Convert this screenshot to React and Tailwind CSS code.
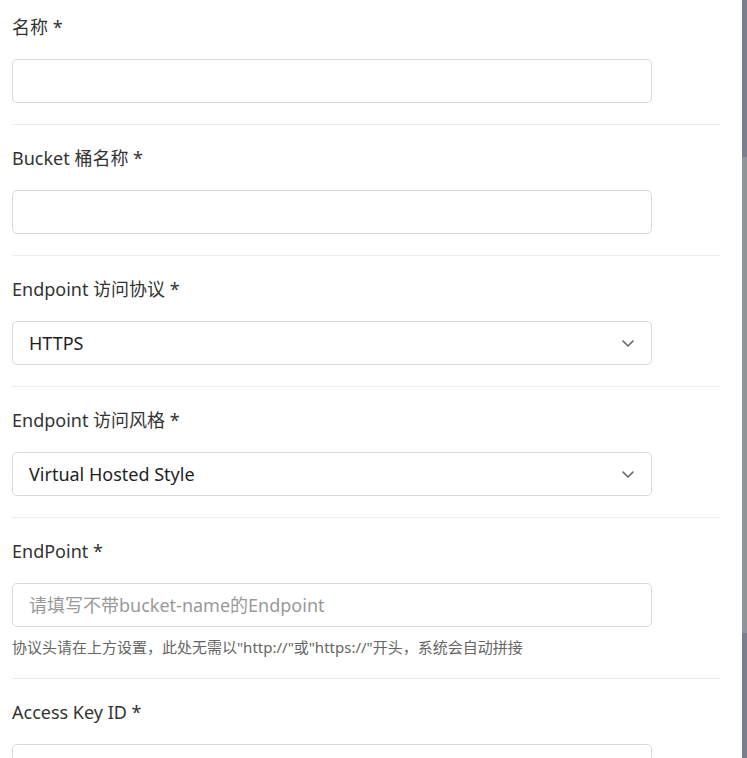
import React, { useState } from 'react'

const font = { fontFamily: '"Noto Sans", "Noto Sans CJK SC", sans-serif' }

function Chevron(){
  return (
    <svg width="14" height="14" viewBox="0 0 14 14" fill="none" stroke="#666" strokeWidth="1.6" strokeLinecap="round" strokeLinejoin="round">
      <path d="M2 5l5 5 5-5" />
    </svg>
  )
}

function Field({ label, children, hint }){
  return (
    <div className="border-b border-[#ececec] pt-[19px] pb-[21px]">
      <div className="text-[18px] leading-[28px] text-[#333] mb-[18px]">{label} *</div>
      {children}
      {hint && <div className="text-[15px] leading-[20px] text-[#666] mt-[10px]">{hint}</div>}
    </div>
  )
}

function TextInput({ placeholder, value, onChange }){
  return (
    <input
      className="block w-[640px] h-[44px] border border-[#d9d9d9] rounded-[5px] px-[16px] text-[18px] text-[#1f1f1f] placeholder:text-[#999] outline-none"
      placeholder={placeholder}
      value={value}
      onChange={e=>onChange(e.target.value)}
    />
  )
}

function Select({ value }){
  return (
    <div className="flex items-center justify-between w-[640px] h-[44px] border border-[#d9d9d9] rounded-[5px] pl-[16px] pr-[16px] text-[18px] text-[#1f1f1f]">
      <span>{value}</span>
      <Chevron />
    </div>
  )
}

export default function App(){
  const [name, setName] = useState('')
  const [bucket, setBucket] = useState('')
  const [endpoint, setEndpoint] = useState('')
  const [keyId, setKeyId] = useState('')

  return (
    <div className="flex w-[747px] h-[758px] overflow-hidden bg-white" style={font}>
      <div className="w-[742px] h-full pl-[12px] pr-[22px] -mt-[6px]">
        <Field label="名称">
          <TextInput value={name} onChange={setName} />
        </Field>
        <Field label="Bucket 桶名称">
          <TextInput value={bucket} onChange={setBucket} />
        </Field>
        <Field label="Endpoint 访问协议">
          <Select value="HTTPS" />
        </Field>
        <Field label="Endpoint 访问风格">
          <Select value="Virtual Hosted Style" />
        </Field>
        <Field label="EndPoint" hint={'协议头请在上方设置，此处无需以"http://"或"https://"开头，系统会自动拼接'}>
          <TextInput placeholder="请填写不带bucket-name的Endpoint" value={endpoint} onChange={setEndpoint} />
        </Field>
        <Field label="Access Key ID">
          <TextInput value={keyId} onChange={setKeyId} />
        </Field>
      </div>
      <div className="flex flex-col w-[5px] h-full">
        <div className="h-[157px] bg-[#7c7f8b]"></div>
        <div className="h-[476px] bg-[#909399]"></div>
        <div className="flex-1 bg-[#7c7f8b]"></div>
      </div>
    </div>
  )
}
